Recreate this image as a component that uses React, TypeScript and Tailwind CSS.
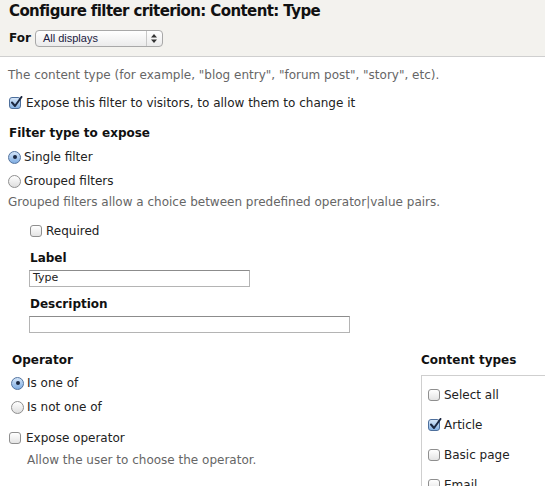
import React from 'react'

const font = { fontFamily: '"DejaVu Sans", Verdana, sans-serif' }

function Checkbox({ checked = false }: { checked?: boolean }) {
  if (checked) {
    return (
      <span className="relative inline-block w-[12px] h-[12px] shrink-0 rounded-[3px] border border-[#4d6f9c] bg-gradient-to-b from-[#d6e6f8] to-[#86b2e4]">
        <svg className="absolute left-[0px] top-[-2px]" width="13" height="13" viewBox="0 0 13 13">
          <path d="M2 6.5 L5 10 L11.5 1" fill="none" stroke="#1b2740" strokeWidth="2" strokeLinecap="round" strokeLinejoin="round" />
        </svg>
      </span>
    )
  }
  return (
    <span className="inline-block w-[12px] h-[12px] shrink-0 rounded-[3px] border border-[#8f8f8f] bg-gradient-to-b from-white to-[#e4e4e4]" />
  )
}

function Radio({ checked = false }: { checked?: boolean }) {
  if (checked) {
    return (
      <span className="flex items-center justify-center w-[13px] h-[13px] shrink-0 rounded-full border border-[#52739f] bg-gradient-to-b from-[#d2e4f8] to-[#80ade2]">
        <span className="w-[4px] h-[4px] rounded-full bg-[#1b2740]" />
      </span>
    )
  }
  return (
    <span className="inline-block w-[13px] h-[13px] shrink-0 rounded-full border border-[#8f8f8f] bg-gradient-to-b from-white to-[#dedede]" />
  )
}

function Row({ children, className = '' }: { children: React.ReactNode; className?: string }) {
  return <div className={`flex items-center h-[18px] whitespace-nowrap ${className}`}>{children}</div>
}

export default function App() {
  return (
    <div className="w-full h-[486px] overflow-hidden bg-white text-[12px] text-[#222]" style={font}>
      <div className="bg-[#f3f2ee] border-b border-[#cfcfcf] h-[57px] px-[9px]">
        <div className="h-[22px] flex items-center text-[15px] font-bold tracking-[-0.6px] text-[#111]">
          Configure filter criterion: Content: Type
        </div>
        <div className="mt-[6px] h-[20px] flex items-center gap-[4px]">
          <span className="font-bold text-[12px] text-[#111]">For</span>
          <div className="flex items-center w-[128px] h-[17px] rounded-[4px] border border-[#a8a8a8] bg-gradient-to-b from-white to-[#ebebeb]">
            <span className="flex-1 pl-[7px] text-[11px] text-[#1a1a40] leading-none" style={{ fontFamily: '"Liberation Sans", Arial, sans-serif' }}>
              All displays
            </span>
            <span className="w-[16px] h-full border-l border-[#c8c8c8] flex items-center justify-center">
              <svg width="6" height="9" viewBox="0 0 6 9">
                <path d="M3 0 L6 3.5 L0 3.5 Z M3 9 L6 5.5 L0 5.5 Z" fill="#333" />
              </svg>
            </span>
          </div>
        </div>
      </div>

      <div className="px-[8px]">
        <Row className="mt-[9px] text-[#666]">
          The content type (for example, "blog entry", "forum post", "story", etc).
        </Row>
        <Row className="mt-[10px] gap-[5px] pl-[1px]">
          <Checkbox checked />
          <span>Expose this filter to visitors, to allow them to change it</span>
        </Row>
        <Row className="mt-[12px] pl-[1px] font-bold text-[#111]">Filter type to expose</Row>
        <Row className="mt-[6px] gap-[3px]">
          <Radio checked />
          <span>Single filter</span>
        </Row>
        <Row className="mt-[6px] gap-[3px]">
          <Radio />
          <span>Grouped filters</span>
        </Row>
        <Row className="mt-[3px] text-[#666]">
          Grouped filters allow a choice between predefined operator|value pairs.
        </Row>

        <div className="pl-[21px]">
          <Row className="mt-[11px] gap-[4px] pl-[1px]">
            <Checkbox />
            <span>Required</span>
          </Row>
          <Row className="mt-[9px] pl-[1px] font-bold text-[#111]">Label</Row>
          <div className="mt-[3px] w-[221px] h-[17px] border border-[#b4b4b4] border-t-[#8c8c8c] flex items-center px-[3px] text-[11px] text-[#222]">
            Type
          </div>
          <Row className="mt-[8px] pl-[1px] font-bold text-[#111]">Description</Row>
          <div className="mt-[3px] w-[321px] h-[17px] border border-[#b4b4b4] border-t-[#8c8c8c]" />
        </div>

        <div className="flex items-start mt-[18px] mr-[-8px]">
          <div className="flex-1">
            <Row className="pl-[4px] font-bold text-[#111]">Operator</Row>
            <Row className="mt-[5px] gap-[3px] pl-[3px]">
              <Radio checked />
              <span>Is one of</span>
            </Row>
            <Row className="mt-[6px] gap-[3px] pl-[3px]">
              <Radio />
              <span>Is not one of</span>
            </Row>
            <Row className="mt-[13px] gap-[5px] pl-[1px]">
              <Checkbox />
              <span>Expose operator</span>
            </Row>
            <Row className="mt-[4px] pl-[19px] text-[#666]">Allow the user to choose the operator.</Row>
          </div>
          <div className="w-[124px] shrink-0">
            <Row className="font-bold text-[#111]">Content types</Row>
            <div className="mt-[6px] border-t border-l border-[#cfcfcf] pt-[10px] pl-[6px] h-[200px]">
              <Row className="gap-[4px]">
                <Checkbox />
                <span>Select all</span>
              </Row>
              <Row className="mt-[12px] gap-[4px]">
                <Checkbox checked />
                <span>Article</span>
              </Row>
              <Row className="mt-[12px] gap-[4px]">
                <Checkbox />
                <span>Basic page</span>
              </Row>
              <Row className="mt-[12px] gap-[4px]">
                <Checkbox />
                <span>Email</span>
              </Row>
            </div>
          </div>
        </div>
      </div>
    </div>
  )
}
